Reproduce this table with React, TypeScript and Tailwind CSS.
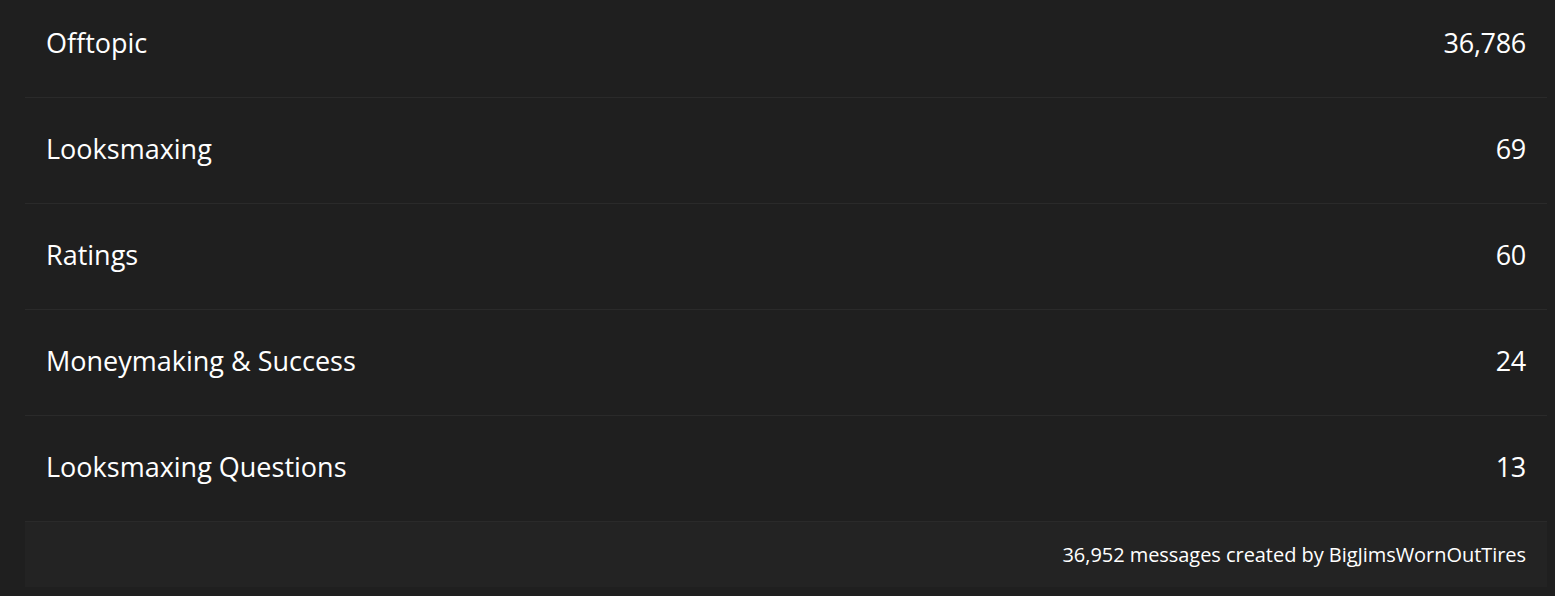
import React from "react";

const rows = [
  { name: "Offtopic", count: "36,786" },
  { name: "Looksmaxing", count: "69" },
  { name: "Ratings", count: "60" },
  { name: "Moneymaking & Success", count: "24" },
  { name: "Looksmaxing Questions", count: "13" },
];

export default function App() {
  return (
    <div
      className="w-[1555px] h-[596px] overflow-hidden bg-[#1f1f1f] text-white"
      style={{ fontFamily: '"Open Sans", "Noto Sans", sans-serif' }}
    >
      <div className="mx-[25px] w-[1522px] -mt-[8px]">
        {rows.map((r) => (
          <div
            key={r.name}
            className="h-[106px] flex items-center justify-between px-[21px] border-b border-[#2a2a2a] text-[27px]"
          >
            <span className="-mt-[3px]">{r.name}</span>
            <span className="-mt-[3px] tracking-[-0.3px]">{r.count}</span>
          </div>
        ))}
        <div className="h-[65px] bg-[#232323] flex items-center justify-end px-[21px] text-[20px] tracking-[-0.05px]">
          36,952 messages created by BigJimsWornOutTires
        </div>
      </div>
    </div>
  );
}
